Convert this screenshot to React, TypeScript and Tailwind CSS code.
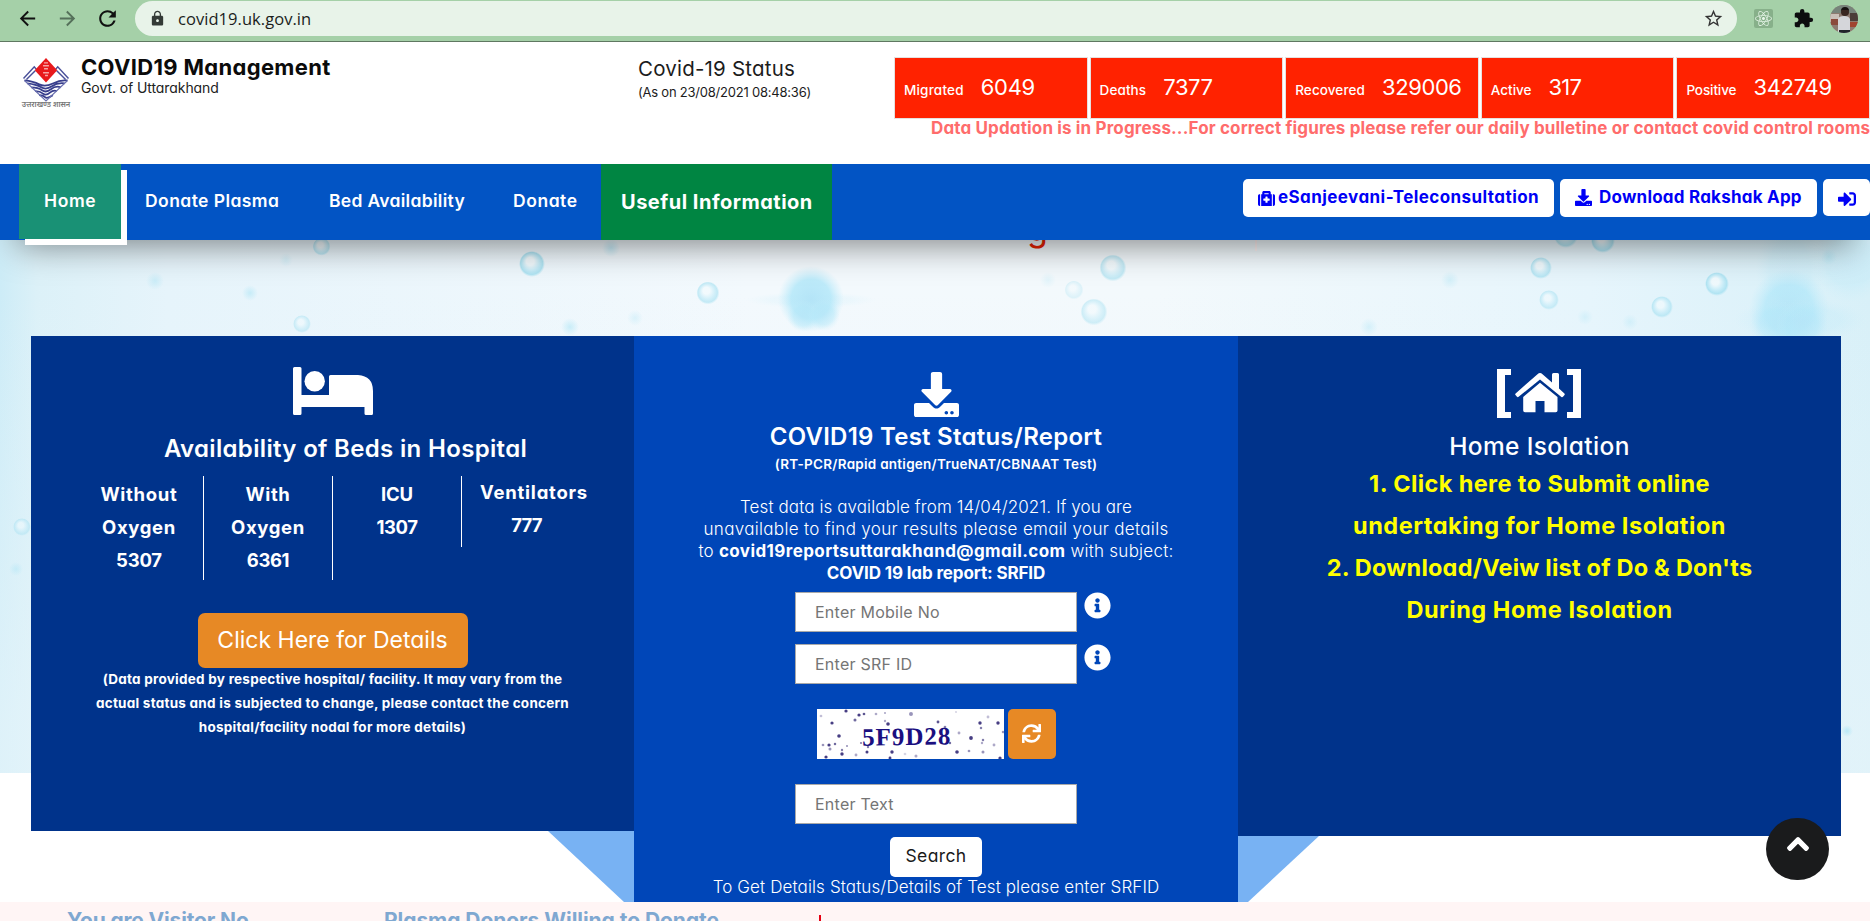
import {
  FaChevronUp,
  FaDownload,
  FaInfoCircle,
  FaMedkit,
  FaReact,
  FaSignInAlt,
  FaSync,
} from 'react-icons/fa';
import { MdArrowBack, MdArrowForward, MdExtension, MdLock, MdRefresh, MdStarBorder } from 'react-icons/md';

function BrowserBar() {
  return (
    <div className="flex h-[42px] items-start border-b border-[#5f7861] bg-[#a5d0a8]">
      <div className="flex h-[36px] w-[135px] shrink-0 items-center pl-[16px]">
        <MdArrowBack className="size-[23px] text-[#111]" />
        <MdArrowForward className="ml-[17px] size-[23px] text-[#55705a]" />
        <MdRefresh className="ml-[16px] size-[25px] text-[#111]" />
      </div>
      <div className="mt-px flex h-[35px] w-[1602px] shrink-0 items-center rounded-full bg-[#e8f3e9] pr-[13px] pl-[14px]">
        <MdLock className="size-[17px] text-[#333a36]" />
        <span className="ml-[12px] pt-px font-['Open_Sans'] text-[16.5px] tracking-[0.05px] text-[#1b1e1c]">covid19.uk.gov.in</span>
        <MdStarBorder className="ml-auto size-[21px] text-[#333]" />
      </div>
      <div className="flex h-[37px] items-center pl-[17px]">
        <span className="flex size-[19px] items-center justify-center rounded-[2px] bg-[#87b08a]">
          <FaReact className="size-[17px] text-[#e6f5e8]" />
        </span>
        <MdExtension className="ml-[20px] size-[21px] text-[#0c0c0e]" />
        <Avatar />
      </div>
    </div>
  );
}

function Avatar() {
  return (
    <svg viewBox="0 0 28 28" className="ml-[16px] size-[28px]">
      <defs>
        <clipPath id="face">
          <circle cx="14" cy="14" r="14" />
        </clipPath>
      </defs>
      <g clipPath="url(#face)">
        <rect width="28" height="28" fill="#8d7a70" />
        <rect width="28" height="8" fill="#77837a" />
        <rect x="0" y="9" width="9" height="8" fill="#c9bfb8" />
        <rect x="1" y="14" width="7" height="6" fill="#8a4a3c" />
        <rect x="20" y="8" width="8" height="8" fill="#4b3c38" />
        <rect x="20" y="17" width="8" height="5" fill="#a0432f" />
        <path d="M8 28V14q1-3 6-3t6 3v14z" fill="#d5d6da" />
        <path d="M9 25h11v3H9z" fill="#20242a" />
        <circle cx="15" cy="7" r="4" fill="#3a2721" />
        <path d="M11 6q0-4 4-4t4 4l-1-1h-6z" fill="#14100f" />
      </g>
    </svg>
  );
}

function Emblem() {
  return (
    <div className="flex w-[48px] flex-col items-center">
      <svg viewBox="0 0 48 45" className="h-[44px] w-[48px]" fill="none">
        <path d="M1 21 12 9l5 6M47 21 36 9l-5 6M4 22l9-9M44 22l-9-9" stroke="#4a509a" strokeWidth="1.5" />
        <path d="M24 0 35.500 12.500 24 25 12.500 12.500z" fill="#e8191c" />
        <path d="M22 5h4M21 8h6M22 11h4M21 15h6M23 18h3" stroke="#f6a5a5" strokeWidth="1.5" />
        <path
          d="M2 23q9 1 15 4t14-1 15-3M5 26q9 1 14 4t11-1 13-3M9 30q7 0 11 3t9-1 10-2M13 34q5 0 8 2.500t7-1 7-1.500M17 38q4 0 6 2t8-2"
          stroke="#383e8c"
          strokeWidth="1.8"
        />
        <path d="M2 23 24 44 46 23" stroke="#6a70b0" strokeWidth="1.200" />
      </svg>
      <span className="text-[7.5px] leading-[6px] font-semibold whitespace-nowrap text-[#777]">उत्तराखण्ड शासन</span>
    </div>
  );
}

const stats = [
  { label: 'Migrated', value: '6049', labelCls: 'tracking-[0.2px]', valueCls: 'tracking-[-0.3px]' },
  { label: 'Deaths', value: '7377', labelCls: 'tracking-[0.1px]', valueCls: 'tracking-[-0.4px]' },
  { label: 'Recovered', value: '329006', labelCls: 'tracking-[0.1px]', valueCls: 'tracking-[-0.4px]' },
  { label: 'Active', value: '317', labelCls: 'tracking-[0px]', valueCls: 'tracking-[-0.7px]' },
  { label: 'Positive', value: '342749', labelCls: 'tracking-[-0.1px]', valueCls: 'tracking-[-0.3px]' },
];

function Header() {
  return (
    <header className="flex h-[122px] bg-white">
      <div className="flex w-[638px] shrink-0 pt-[12px] pl-[22px]">
        <div className="pt-[4px]">
          <Emblem />
        </div>
        <div className="pl-[11px]">
          <h1 className="text-[22px] leading-[26px] font-bold tracking-[0.33px] text-[#0b0b0b]">COVID19 Management</h1>
          <p className="-mt-px text-[14px] leading-[18px] tracking-[-0.08px] text-[#222]">Govt. of Uttarakhand</p>
        </div>
      </div>
      <div className="w-[256px] shrink-0 pt-[14px] text-[#1c1c1c]">
        <p className="text-[20.5px] leading-[26px] tracking-[0.2px]">Covid-19 Status</p>
        <p className="mt-px text-[13px] leading-[18px] tracking-[-0.22px]">(As on 23/08/2021 08:48:36)</p>
      </div>
      <div className="flex min-w-0 flex-1 flex-col overflow-hidden pt-[15px]">
        <div className="flex gap-[2px]">
          {stats.map((s) => (
            <div
              key={s.label}
              className="flex h-[62px] w-[193.6px] shrink-0 items-baseline border border-[#e6e0df] bg-[#ff2200] pt-[14px] pl-[9px] leading-[30px] whitespace-nowrap text-white"
            >
              <span className={`text-[13.5px] font-medium ${s.labelCls}`}>{s.label}</span>
              <span className={`ml-[17px] text-[22px] ${s.valueCls}`}>{s.value}</span>
            </div>
          ))}
        </div>
        <p className="-mt-[2px] pl-[37px] text-[17px] leading-[22px] font-bold tracking-[0.145px] whitespace-nowrap text-[#ff6c6c]">
          Data Updation is in Progress...For correct figures please refer our daily bulletine or contact covid control rooms
        </p>
      </div>
    </header>
  );
}

function NavBar() {
  return (
    <nav className="relative z-10 flex h-[76px] items-start bg-[#0254c4] pl-[19px] text-[17.5px] font-semibold whitespace-nowrap text-white shadow-[0_22px_35px_-18px_rgba(0,0,0,0.5)]">
      <a className="flex h-[75px] w-[102px] items-center bg-[#199175] pl-[25px] tracking-[0.6px] shadow-[6px_6px_0_#ffffff]">
        Home
      </a>
      <a className="flex h-[75px] w-[184px] items-center pl-[24px] tracking-[0.43px]">Donate Plasma</a>
      <a className="flex h-[75px] w-[184px] items-center pl-[24px] tracking-[0.3px]">Bed Availability</a>
      <a className="flex h-[75px] w-[112px] items-center pl-[24px] tracking-[0.55px]">Donate</a>
      <a className="flex h-[76px] w-[231px] items-center bg-[#008542] pl-[20px] text-[20px] font-bold tracking-[0.5px]">
        Useful Information
      </a>
      <div className="mt-[15px] ml-auto flex gap-[6px] font-bold text-[#0000f5]">
        <a className="flex h-[38px] w-[311px] items-center rounded-[5px] bg-white pl-[15px] text-[17px] tracking-[0.43px]">
          <FaMedkit className="mr-[3px] size-[17px]" />
          eSanjeevani-Teleconsultation
        </a>
        <a className="flex h-[38px] w-[257px] items-center rounded-[5px] bg-white pl-[15px] text-[17px] tracking-[0.22px]">
          <FaDownload className="mr-[7px] mb-[2px] size-[17px]" />
          Download Rakshak App
        </a>
        <a className="flex h-[37px] w-[47px] items-center rounded-[5px] bg-white pl-[15px]">
          <FaSignInAlt className="mt-[2px] size-[18px]" />
        </a>
      </div>
    </nav>
  );
}

const bubbles = [
  [321.6, 246.7, 8, 0.7],
  [532, 264, 12, 0.9],
  [302, 324, 8, 0.5],
  [22, 527, 8, 0.5],
  [708, 293, 10.5, 0.65],
  [1113, 268, 12.5, 0.65],
  [1074, 290, 8.5, 0.3],
  [1094, 312, 12.5, 0.5],
  [1566, 236, 11, 0.8],
  [1603, 241, 11, 0.9],
  [1541, 268, 10, 0.75],
  [1549, 300, 9, 0.55],
  [1662, 307, 10, 0.65],
  [1717, 284, 11, 0.85],
];

const specks = [
  [155, 281, 9, 0.5],
  [250, 293, 8, 0.6],
  [286, 260, 7, 0.3],
  [570, 327, 9, 0.6],
  [611, 248, 9, 0.6],
  [635, 318, 8, 0.35],
  [1048, 280, 8, 0.25],
  [1450, 280, 9, 0.4],
  [1369, 327, 9, 0.4],
  [1585, 317, 8, 0.35],
  [1630, 322, 8, 0.35],
  [16, 569, 7, 0.5],
  [1847, 731, 6, 0.8],
  [1829, 257, 8, 0.5],
];

function Backdrop() {
  return (
    <svg viewBox="0 240 1870 533" className="absolute top-0 left-0 h-[533px] w-[1870px]">
      <defs>
        <linearGradient id="sky" x1="0" x2="1" y1="0" y2="0">
          <stop offset="0" stopColor="#cdecf7" />
          <stop offset="0.02" stopColor="#dcf1f8" />
          <stop offset="0.09" stopColor="#e6f4fb" />
          <stop offset="0.4" stopColor="#f3f9fd" />
          <stop offset="0.62" stopColor="#f3f9fc" />
          <stop offset="0.85" stopColor="#e6f5fc" />
          <stop offset="1" stopColor="#d8f0f8" />
        </linearGradient>
        <linearGradient id="fade" x1="0" x2="0" y1="0" y2="1">
          <stop offset="0.1" stopColor="#e5f4fa" stopOpacity="0" />
          <stop offset="0.9" stopColor="#e5f4fa" stopOpacity="0.7" />
        </linearGradient>
        <radialGradient id="virus">
          <stop offset="0" stopColor="#b4e4f7" />
          <stop offset="0.6" stopColor="#b4e8f9" stopOpacity="0.85" />
          <stop offset="1" stopColor="#c4ecfa" stopOpacity="0" />
        </radialGradient>
        <radialGradient id="speck">
          <stop offset="0" stopColor="#b0e6f6" />
          <stop offset="1" stopColor="#b0e6f6" stopOpacity="0" />
        </radialGradient>
        <radialGradient id="bubble" cx="0.5" cy="0.5" r="0.5" fx="0.4" fy="0.35">
          <stop offset="0.3" stopColor="#f2fafd" />
          <stop offset="0.65" stopColor="#c0eaf7" />
          <stop offset="0.85" stopColor="#a8e1f1" />
          <stop offset="1" stopColor="#b5e6f4" stopOpacity="0" />
        </radialGradient>
      </defs>
      <rect y="240" width="1870" height="533" fill="url(#sky)" />
      <rect y="240" width="1870" height="533" fill="url(#fade)" />
      <g fill="url(#virus)">
        <circle cx="811" cy="299" r="33" />
        <ellipse cx="811" cy="300" rx="66" ry="8" opacity="0.15" />
        <circle cx="803" cy="316" r="16" opacity="0.5" />
        <circle cx="824" cy="315" r="16" opacity="0.5" />
        <circle cx="1789" cy="309" r="40" opacity="0.9" />
        <circle cx="1776" cy="325" r="26" opacity="0.5" />
        <circle cx="1802" cy="325" r="26" opacity="0.6" />
        <ellipse cx="1800" cy="320" rx="66" ry="22" opacity="0.25" />
        <ellipse cx="1790" cy="270" rx="34" ry="50" opacity="0.25" />
        <circle cx="1850" cy="262" r="40" opacity="0.3" />
      </g>
      {specks.map(([x, y, r, o]) => (
        <circle key={`${x}-${y}`} cx={x} cy={y} r={r} opacity={o} fill="url(#speck)" />
      ))}
      {bubbles.map(([x, y, r, o]) => (
        <circle key={`${x}-${y}`} cx={x} cy={y} r={r + 1} opacity={o} fill="url(#bubble)" />
      ))}
    </svg>
  );
}

function BedsPanel() {
  return (
    <section className="flex h-[495px] w-[603px] shrink-0 flex-col items-center bg-[#00338b] pt-[31px] text-white">
      <svg viewBox="0 0 80 48" className="ml-px h-[48px] w-[80px]" fill="currentColor">
        <path d="M1.500 0h5.500q1.500 0 1.500 1.500V28H36V9.500q0-1.500 1.500-1.500H65q15 1 15 16v22.500q0 1.500-1.500 1.500h-5.500q-1.500 0-1.500-1.500V40H8.500v6.500Q8.500 48 7 48H1.500Q0 48 0 46.500v-45Q0 0 1.500 0z" />
        <circle cx="21.700" cy="14.300" r="10.200" />
      </svg>
      <h2 className="mt-[19px] pl-[26px] text-[24px] leading-[30px] font-semibold tracking-[0.33px]">
        Availability of Beds in Hospital
      </h2>
      <div className="mt-[12px] flex h-[104px] w-full items-start pl-[44px] text-center text-[18.5px] leading-[33px] font-bold">
        <div className="h-[104px] w-[129px] border-r border-white pt-[2px]">
          <div className="tracking-[0.7px]">Without</div>
          <div className="tracking-[0.65px]">Oxygen</div>
          <div className="tracking-[-0.2px]">5307</div>
        </div>
        <div className="h-[104px] w-[129px] border-r border-white pt-[2px]">
          <div className="tracking-[0.6px]">With</div>
          <div className="tracking-[0.65px]">Oxygen</div>
          <div className="tracking-[-0.4px]">6361</div>
        </div>
        <div className="h-[71px] w-[129px] border-r border-white pt-[2px]">
          <div className="tracking-[-0.1px]">ICU</div>
          <div className="tracking-[-0.4px]">1307</div>
        </div>
        <div className="w-[129px]">
          <div className="pl-[15px] tracking-[0.75px]">Ventilators</div>
          <div className="tracking-[-0.9px]">777</div>
        </div>
      </div>
      <button className="mt-[33px] h-[55px] w-[270px] rounded-[7px] bg-[#e78925] text-[23px]">
        Click Here for Details
      </button>
      <p className="-mt-px text-center text-[13.5px] leading-[24px] font-bold tracking-[0.25px]">
        (Data provided by respective hospital/ facility. It may vary from the
        <br />
        actual status and is subjected to change, please contact the concern
        <br />
        hospital/facility nodal for more details)
      </p>
    </section>
  );
}

const dots = [
  [4, 7, 1.5, 3], [29, 2, 1.8, 9], [42, 6, 1.8, 9], [47, 5, 1.5, 8], [38, 11, 1.7, 7], [15, 14, 1.8, 9],
  [59, 5, 1.5, 4], [68, 4, 1.2, 4], [71, 15, 2, 9], [68, 12, 1.3, 4], [94, 5, 2.2, 5], [121, 13, 1.6, 8],
  [128, 18, 1.5, 6], [139, 3, 1.2, 2], [171, 8, 1.6, 3], [163, 14, 1.9, 9], [181, 14, 1.9, 9], [164, 19, 1.4, 6],
  [186, 23, 1.4, 5], [22, 27, 2, 9], [142, 24, 1.6, 4], [154, 29, 2.1, 9], [166, 31, 1.4, 6], [177, 36, 1.6, 4],
  [6, 36, 1.5, 5], [12, 36, 1.8, 9], [18, 35, 1.4, 7], [13, 40, 1.7, 5], [25, 45, 1.9, 9], [9, 48, 1.8, 9],
  [39, 46, 1.6, 4], [50, 43, 1.7, 9], [51, 38, 1.3, 6], [75, 43, 1.9, 9], [73, 49, 1.6, 9], [88, 45, 1.5, 2],
  [99, 47, 1.7, 4], [140, 43, 2, 9], [152, 42, 1.5, 5], [165, 34, 1.3, 4], [166, 43, 1.7, 5], [183, 49, 1.8, 9],
  [30, 37, 1.2, 5], [133, 34, 1.3, 7], [44, 34, 1.2, 6], [25, 41, 1.3, 6],
];

function Captcha() {
  return (
    <div className="relative flex h-[50px] w-[187px] items-center justify-center bg-white">
      <svg viewBox="0 0 187 50" className="absolute inset-0 h-[50px] w-[187px]" fill="#1e1468">
        {dots.map(([x, y, r, o]) => (
          <circle key={`${x}-${y}`} cx={x} cy={y} r={r * 0.9} opacity={o / 11} />
        ))}
      </svg>
      <span className="relative -rotate-1 pt-[5px] pr-[8px] font-['Liberation_Serif'] text-[25px] leading-none font-bold tracking-[1px] text-[#1a0f80]">
        5F9D28
      </span>
    </div>
  );
}

const inputCls =
  'h-[40px] w-[282px] border border-[#a9a9a9] bg-white pb-px pl-[19px] text-[16px] tracking-[0.25px] text-[#222] placeholder:text-[#757575]';

function TestPanel() {
  return (
    <section className="flex h-[566px] w-[604px] shrink-0 flex-col bg-[#0046b8] pt-[36px] text-center text-white">
      <FaDownload className="h-[45px] w-[45px] self-center" />
      <h2 className="mt-[5px] text-[24px] leading-[30px] font-semibold tracking-[0.25px]">COVID19 Test Status/Report</h2>
      <p className="mt-[3px] text-[13.5px] leading-[18px] font-semibold tracking-[0.26px]">
        (RT-PCR/Rapid antigen/TrueNAT/CBNAAT Test)
      </p>
      <div className="mt-[23px] text-[17px] leading-[22px] font-light whitespace-nowrap">
        <p className="tracking-[0.1px]">Test data is available from 14/04/2021. If you are</p>
        <p className="tracking-[0.33px]">unavailable to find your results please email your details</p>
        <p className="tracking-[0.25px]">
          to <b className="font-bold tracking-[0.4px]">covid19reportsuttarakhand@gmail.com</b> with subject:
        </p>
        <p className="font-bold tracking-[-0.12px]">COVID 19 lab report: SRFID</p>
      </div>
      <div className="mt-[8px] flex pl-[161px]">
        <input className={inputCls} placeholder="Enter Mobile No" />
        <FaInfoCircle className="ml-[7px] size-[27px]" />
      </div>
      <div className="mt-[12px] flex pl-[161px]">
        <input className={inputCls} placeholder="Enter SRF ID" />
        <FaInfoCircle className="ml-[7px] size-[27px]" />
      </div>
      <div className="mt-[25px] flex pl-[183px]">
        <Captcha />
        <button className="ml-[4px] flex h-[50px] w-[48px] items-center justify-center rounded-[5px] bg-[#e78925] pr-px pb-[2px]">
          <FaSync className="size-[19px]" />
        </button>
      </div>
      <div className="mt-[25px] flex pl-[161px]">
        <input className={inputCls} placeholder="Enter Text" />
      </div>
      <button className="mt-[13px] h-[40px] w-[92px] self-center rounded-[5px] bg-white pb-px text-[17.5px] tracking-[0.35px] text-[#1a1a1a]">
        Search
      </button>
      <p className="-mt-[2px] text-[17px] leading-[24px] font-light tracking-[0.12px]">
        To Get Details Status/Details of Test please enter SRFID
      </p>
    </section>
  );
}

function IsolationPanel() {
  return (
    <section className="flex h-[500px] w-[603px] shrink-0 flex-col items-center bg-[#00338b] pt-[33px] text-center text-white">
      <svg viewBox="0 0 84 49" className="mr-px h-[49px] w-[84px]" fill="currentColor">
        <path d="M0 0h14v6H8v37h6v6H0zM84 0H70v6h6v37h-6v6h14z" />
        <path d="M40.500 5.200q2.500-2.400 5 0L55 13.500V5.500q0-1.500 1.500-1.500h4q1.500 0 1.500 1.500v14l5.400 5q.8.800.1 1.600l-1.500 1.700q-.8.800-1.600.1L43 10.600 21.600 27.800q-.8.700-1.600-.1l-1.500-1.700q-.7-.8.100-1.600z" />
        <path d="M43 13.700 60.500 28v13.500q0 1.800-1.800 1.800H47.500V32h-9v11.300H28q-1.800 0-1.800-1.800V28z" />
      </svg>
      <h2 className="mt-[13px] text-[24.5px] leading-[30px] font-medium tracking-[0.35px]">Home Isolation</h2>
      <div className="mt-[2px] text-[23.5px] leading-[42px] font-bold text-[#ffff00]">
        <p className="tracking-[0.4px]">1. Click here to Submit online</p>
        <p className="tracking-[0.53px]">undertaking for Home Isolation</p>
        <p className="tracking-[0.22px]">2. Download/Veiw list of Do &amp; Don'ts</p>
        <p className="tracking-[0.53px]">During Home Isolation</p>
      </div>
    </section>
  );
}

export default function App() {
  return (
    <div className="relative h-[921px] w-[1870px] overflow-hidden bg-white font-[Inter,'Noto_Sans',sans-serif] [font-feature-settings:'cv11']">
      <BrowserBar />
      <Header />
      <NavBar />
      <main className="relative h-[662px]">
        <Backdrop />
        <span className="absolute top-[-27px] left-[1027px] text-[34px] leading-[32px] text-[#e82100]">g</span>
        <span className="absolute top-0 left-[1255px] h-[11px] w-[2px] bg-[#fff3f3]" />
        <div className="absolute top-[591px] left-[548px] h-[71px] w-[86px] bg-[#78b2f3] [clip-path:polygon(0_0,100%_0,100%_100%,76px_100%)]" />
        <div className="absolute top-[596px] left-[1238px] h-[66px] w-[81px] bg-[#78b2f3] [clip-path:polygon(0_0,100%_0,10px_100%,0_100%)]" />
        <div className="relative flex items-start pt-[96px] pl-[31px]">
          <BedsPanel />
          <TestPanel />
          <IsolationPanel />
        </div>
      </main>
      <footer className="flex h-[19px] overflow-hidden bg-[#fff5f5] pt-[6px] text-[21px] leading-[26px] font-bold whitespace-nowrap text-[#7fa8d1]">
        <span className="w-[317px] pl-[67px] tracking-[-0.15px]">You are Visitor No</span>
        <span className="w-[502px] pl-[67px] tracking-[-0.05px]">Plasma Donors Willing to Donate</span>
        <span className="mt-[7px] h-[20px] w-[2px] bg-[#e60012]" />
      </footer>
      <button className="absolute top-[818px] left-[1766px] z-20 flex h-[62px] w-[63px] justify-center rounded-full bg-[#1a1b1c] pt-[14px] text-white">
        <FaChevronUp className="size-[24px] stroke-white stroke-[30px]" />
      </button>
    </div>
  );
}
